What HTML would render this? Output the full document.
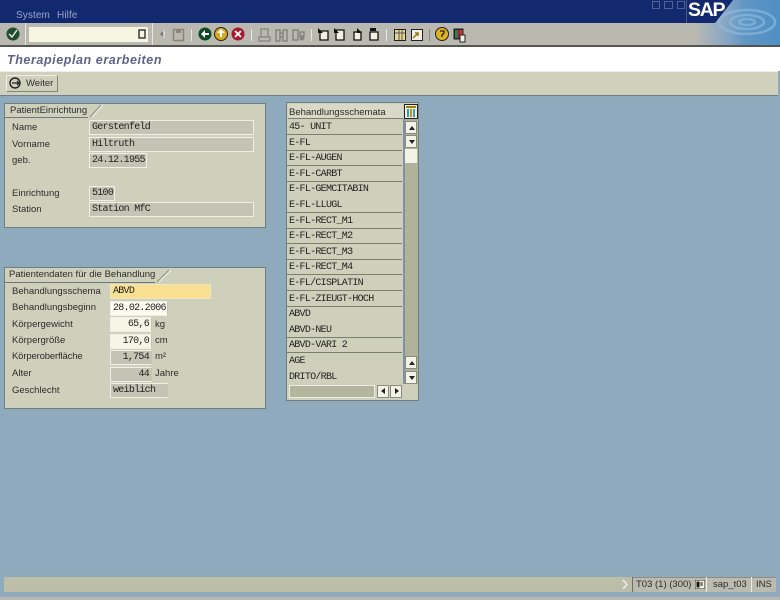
<!DOCTYPE html>
<html><head><meta charset="utf-8"><style>
html,body{margin:0;padding:0;width:780px;height:600px;overflow:hidden;background:#8fa9bd}
body{position:relative;font:10px "Liberation Sans",sans-serif;color:#222}
div,span,svg{position:absolute;box-sizing:border-box}
.l{font-size:9.500px;color:#2c2c2c;white-space:nowrap;filter:blur(.3px);height:14px;line-height:14px}
.f{font-family:"Liberation Mono",monospace;font-size:10px;letter-spacing:-.72px;color:#222;white-space:pre;height:15px;line-height:14px;padding:0 2px;background:#c3c4b4;border:1px solid #eef0e6;border-right-color:#c3c4b4;filter:blur(.25px)}
.p{background:#cfd0bb;border:1px solid #6f7f7f}
.r{left:0;width:115px;height:16px;border-bottom:1px solid #78806e;font-family:"Liberation Mono",monospace;font-size:10px;letter-spacing:-.72px;line-height:17px;padding-left:2px;color:#222;white-space:pre;filter:blur(.25px)}
.b{background:#f2f2e6;border:1px solid #8a8a80}
.a{width:0;height:0;left:3px}
</style></head><body>
<div style="left:0;top:0;width:780px;height:23px;background:#12286f"></div>
<div style="left:16px;top:10px;color:#9aa6c6;font-size:10px;letter-spacing:.1px;filter:blur(.3px)">System</div>
<div style="left:57px;top:10px;color:#9aa6c6;font-size:10px;letter-spacing:.1px;filter:blur(.3px)">Hilfe</div>
<div style="left:652px;top:1px;width:8px;height:8px;border:1px solid #53638f"></div>
<div style="left:664px;top:1px;width:9px;height:8px;border:1px solid #53638f"></div>
<div style="left:677px;top:1px;width:8px;height:8px;border:1px solid #53638f"></div>
<div style="left:0;top:23px;width:780px;height:23px;background:#b9b9b1"></div>
<svg style="left:695px;top:0" width="85" height="46" viewBox="0 0 85 46">
<defs><linearGradient id="g" x1="0" y1="0" x2="1" y2="0"><stop offset="0" stop-color="#b9b9b1"/><stop offset=".35" stop-color="#8aa7c4"/><stop offset=".6" stop-color="#5f95c4"/><stop offset="1" stop-color="#4f8fc4"/></linearGradient></defs>
<polygon points="0,46 0,23 20,23 38,0 85,0 85,46" fill="url(#g)"/>
<g fill="none" stroke="#8fc0e2" stroke-width="2.500" opacity=".6"><ellipse cx="52" cy="22" rx="28" ry="12"/><ellipse cx="52" cy="22" rx="17" ry="7"/><ellipse cx="52" cy="22" rx="8" ry="3"/></g>
<polygon points="-8,0 38,0 20,23 -8,23" fill="#12286f"/>
</svg>
<div style="left:686px;top:0;width:1px;height:23px;background:#4a5a80"></div>
<div style="left:688px;top:-2px;color:#fff;font-weight:bold;font-size:19.500px;letter-spacing:-1.300px;line-height:24px">SAP</div>
<div style="left:0;top:45px;width:780px;height:2px;background:#55554f"></div>

<svg style="left:0;top:23px" width="480" height="24" viewBox="0 0 480 24">
<rect x="25" y="0" width="1" height="22" fill="#e6e6de"/>
<rect x="152" y="0" width="1" height="22" fill="#e6e6de"/>
<rect x="29" y="4" width="119" height="15" fill="#f6f6e2"/>
<rect x="139" y="7" width="6" height="8" fill="none" stroke="#222" stroke-width="1.300"/>
<circle cx="13" cy="11" r="6.500" fill="#1f4d2c"/><path d="M9 11l3 3 5-7" stroke="#e8e8e8" stroke-width="1.500" fill="none"/>
<path d="M163 8l-3 3 3 3z" fill="#777"/><path d="M164 7v8" stroke="#e8e8e0"/>
<rect x="173.500" y="6.500" width="10" height="11" fill="none" stroke="#8f8474" stroke-width="1.500"/><rect x="176" y="7" width="5" height="3" fill="#8f8474"/>
<rect x="191" y="6" width="1" height="12" fill="#e8e8e0"/>
<circle cx="205" cy="11" r="6.500" fill="#0f4a26"/><path d="M201 11l4-4v3h4v2h-4v3z" fill="#fff"/>
<circle cx="221" cy="11" r="6.500" fill="#d8a820" stroke="#222"/><path d="M221 6l-4 4h3v4h2v-4h3z" fill="#fff"/>
<circle cx="238" cy="11" r="6.500" fill="#a81830"/><path d="M235 8l6 6m0-6l-6 6" stroke="#fff" stroke-width="1.800"/>
<rect x="251" y="6" width="1" height="12" fill="#e8e8e0"/>
<path d="M259 14h11v4h-11zM261 6h7v8h-7z" fill="none" stroke="#858580" stroke-width="1.300"/>
<path d="M276 7h4v11h-4zM283 7h4v11h-4zM280 10h3v4h-3z" fill="none" stroke="#858580" stroke-width="1.500"/>
<path d="M293 7h5v10h-5zM300 9h4v4h-4z" fill="none" stroke="#858580" stroke-width="1.500"/><circle cx="302" cy="15" r="2.500" fill="#858580"/>
<rect x="311" y="6" width="1" height="12" fill="#e8e8e0"/>
<g fill="#f2f2e0" stroke="#111" stroke-width="1.300"><path d="M320 8h8v9h-8z"/><path d="M336 7h8v10h-8z"/><path d="M354 9h7v8h-7z"/><path d="M370 9h8v8h-8z"/></g>
<g fill="#111"><path d="M318 5l5 5h-5z"/><path d="M334 5l5 5h-5z"/><path d="M357 5l5 5h-5z"/><path d="M370 5h6v3h-6z"/></g>
<rect x="386" y="6" width="1" height="12" fill="#e8e8e0"/>
<rect x="394.500" y="6.500" width="11" height="11" fill="#e8d890" stroke="#222"/><path d="M395 10h10M399 7v10M402 7v10" stroke="#555"/>
<rect x="411.500" y="6.500" width="11" height="11" fill="#f0f0e8" stroke="#222"/><path d="M413 15l5-5m-3 0h3v3" stroke="#a07810" stroke-width="1.500" fill="none"/>
<rect x="429" y="6" width="1" height="12" fill="#8a8a82"/>
<circle cx="442" cy="11" r="6.500" fill="#e0b020" stroke="#222"/><path d="M440 8h4v2l-2 2v2" stroke="#222" fill="none" stroke-width="1.300"/>
<rect x="453.500" y="5.500" width="10" height="11" fill="#222"/><rect x="455" y="7" width="2.500" height="8" fill="#2a8a3a"/><rect x="457.500" y="7" width="2.500" height="8" fill="#a02060"/><rect x="460" y="7" width="2.500" height="8" fill="#c04020"/>
<rect x="460" y="12" width="5" height="7" fill="#f0f0e8" stroke="#222"/>
</svg>

<div style="left:0;top:47px;width:780px;height:24px;background:#fff"></div>
<div style="left:7px;top:52px;font:italic bold 12.500px 'Liberation Sans',sans-serif;color:#5d6286;letter-spacing:.58px;line-height:16px;filter:blur(.2px)">Therapieplan erarbeiten</div>
<div style="left:0;top:71px;width:778px;height:25px;background:#d0d1bd;border-top:1px solid #f0f0e8;border-bottom:1px solid #6f8088"></div>
<div style="left:6px;top:75px;width:52px;height:17px;border:1px solid #a8a898;border-left-color:#eeeee4;border-top-color:#eeeee4;border-right-color:#858578;border-bottom-color:#858578;background:#d0d1bd"></div>
<svg style="left:8px;top:76px" width="16" height="15"><circle cx="7" cy="7" r="5" fill="none" stroke="#222" stroke-width="1.400"/><path d="M4 7h7l-2-2M11 7l-2 2" stroke="#222" fill="none" stroke-width="1.200"/></svg>
<div class="l" style="left:26px;top:77px">Weiter</div>

<div class="p" style="left:4px;top:103px;width:262px;height:125px"></div>
<svg style="left:5px;top:104px" width="100" height="15"><path d="M0 13.500H83" fill="none" stroke="#6a7a7a"/><path d="M85 13L96 1" stroke="#8a9080" fill="none"/><path d="M87 13L98 1" stroke="#eee" fill="none"/></svg>
<div class="l" style="left:10px;top:104px">PatientEinrichtung</div>
<div class="l" style="left:12px;top:121px">Name</div>
<div class="l" style="left:12px;top:138px">Vorname</div>
<div class="l" style="left:12px;top:154px">geb.</div>
<div class="l" style="left:12px;top:187px">Einrichtung</div>
<div class="l" style="left:12px;top:203px">Station</div>
<div class="f" style="left:89px;top:120px;width:165px;border-color:#eef0e6">Gerstenfeld</div>
<div class="f" style="left:89px;top:137px;width:165px;border-color:#eef0e6">Hiltruth</div>
<div class="f" style="left:89px;top:153px;width:58px;border-color:#eef0e6">24.12.1955</div>
<div class="f" style="left:89px;top:186px;width:26px;border-color:#eef0e6">5100</div>
<div class="f" style="left:89px;top:202px;width:165px;border-color:#eef0e6">Station MfC</div>

<div class="p" style="left:4px;top:267px;width:262px;height:142px"></div>
<svg style="left:5px;top:268px" width="170" height="15"><path d="M0 14.500H150" fill="none" stroke="#6a7a7a"/><path d="M152 14L164 2" stroke="#8a9080" fill="none"/><path d="M154 14L166 2" stroke="#eee" fill="none"/></svg>
<div class="l" style="left:9px;top:268px">Patientendaten für die Behandlung</div>
<div class="l" style="left:12px;top:285px">Behandlungsschema</div>
<div class="l" style="left:12px;top:301px">Behandlungsbeginn</div>
<div class="l" style="left:12px;top:318px">Körpergewicht</div>
<div class="l" style="left:12px;top:334px">Körpergröße</div>
<div class="l" style="left:12px;top:350px;letter-spacing:-.15px">Körperoberfläche</div>
<div class="l" style="left:12px;top:367px">Alter</div>
<div class="l" style="left:12px;top:384px">Geschlecht</div>
<div class="f" style="left:110px;top:284px;width:101px;background:#f8e090;border-color:#eee8c0">ABVD</div>
<div class="f" style="left:110px;top:301px;width:58px;background:#fbfbf0">28.02.2006</div>
<div class="f" style="left:110px;top:317px;width:42px;background:#f5f5e6;text-align:right">65,6</div>
<div class="f" style="left:110px;top:334px;width:42px;background:#f5f5e6;text-align:right">170,0</div>
<div class="f" style="left:110px;top:350px;width:42px;text-align:right">1,754</div>
<div class="f" style="left:110px;top:367px;width:42px;text-align:right">44</div>
<div class="f" style="left:110px;top:383px;width:58px">weiblich</div>
<div class="l" style="left:155px;top:318px">kg</div>
<div class="l" style="left:155px;top:334px">cm</div>
<div class="l" style="left:155px;top:350px">m²</div>
<div class="l" style="left:155px;top:367px">Jahre</div>

<div style="left:286px;top:102px;width:133px;height:299px;background:#cfd0bb;border:1px solid #6f7f7f">
<div style="left:1px;top:1px;width:115px;height:15px;background:#d8d9c6;border-bottom:1px solid #78806e"></div>
<div class="l" style="left:2px;top:3px">Behandlungsschemata</div>
<svg style="left:117px;top:1px" width="14" height="15"><rect x=".5" y=".5" width="13" height="14" fill="#f0f0e0" stroke="#222"/><rect x="2" y="2" width="10" height="2" fill="#a08000"/><rect x="3" y="5" width="2" height="8" fill="#30a0b0"/><rect x="6" y="5" width="2" height="8" fill="#c09020"/><rect x="9" y="5" width="2" height="8" fill="#30a0b0"/></svg>
<div style="left:0;top:16px;width:116px;height:266px">
<div class="r" style="top:0">45- UNIT</div>
<div class="r" style="top:15.600px">E-FL</div>
<div class="r" style="top:31.200px">E-FL-AUGEN</div>
<div class="r" style="top:46.800px">E-FL-CARBT</div>
<div class="r" style="top:62.400px;border:0">E-FL-GEMCITABIN</div>
<div class="r" style="top:78px">E-FL-LLUGL</div>
<div class="r" style="top:93.600px">E-FL-RECT_M1</div>
<div class="r" style="top:109.200px">E-FL-RECT_M2</div>
<div class="r" style="top:124.800px">E-FL-RECT_M3</div>
<div class="r" style="top:140.400px">E-FL-RECT_M4</div>
<div class="r" style="top:156px">E-FL/CISPLATIN</div>
<div class="r" style="top:171.600px">E-FL-ZIEUGT-HOCH</div>
<div class="r" style="top:187.200px;border:0">ABVD</div>
<div class="r" style="top:202.800px">ABVD-NEU</div>
<div class="r" style="top:218.400px">ABVD-VARI 2</div>
<div class="r" style="top:234px;border:0">AGE</div>
<div class="r" style="top:249.600px;border:0">DRITO/RBL</div>
</div>
<div style="left:116px;top:16px;width:2px;height:265px;background:#7c93a5"></div>
<div style="left:118px;top:16px;width:13px;height:265px;background:#b0b39a"></div>
<div class="b" style="left:118px;top:18px;width:12px;height:13px"><div class="a" style="top:4px;border:3px solid transparent;border-top:0;border-bottom:4px solid #222"></div></div>
<div class="b" style="left:118px;top:32px;width:12px;height:13px"><div class="a" style="top:4px;border:3px solid transparent;border-bottom:0;border-top:4px solid #222"></div></div>
<div class="b" style="left:118px;top:46px;width:12px;height:14px;border-color:#f2f2e6"></div>
<div class="b" style="left:118px;top:253px;width:12px;height:13px"><div class="a" style="top:4px;border:3px solid transparent;border-top:0;border-bottom:4px solid #222"></div></div>
<div class="b" style="left:118px;top:268px;width:12px;height:13px"><div class="a" style="top:4px;border:3px solid transparent;border-bottom:0;border-top:4px solid #222"></div></div>
<div style="left:2px;top:282px;width:86px;height:13px;background:#b3b59c;border:1px solid #eeeee2"></div>
<div class="b" style="left:90px;top:282px;width:12px;height:13px"><div style="left:3px;top:2px;width:0;height:0;border:3px solid transparent;border-left:0;border-right:4px solid #222"></div></div>
<div class="b" style="left:103px;top:282px;width:12px;height:13px"><div style="left:4px;top:2px;width:0;height:0;border:3px solid transparent;border-right:0;border-left:4px solid #222"></div></div>
</div>

<div style="left:4px;top:577px;width:772px;height:15px;background:#bcbea8"></div>
<div style="left:632px;top:577px;width:144px;height:15px;background:#bbbcaf;border-top:1px solid #8d8d80"></div>
<svg style="left:620px;top:579px" width="10" height="12"><path d="M3 1l4 4.500L3 10" stroke="#eee" fill="none" stroke-width="1.500"/></svg>
<div style="left:632px;top:577px;width:1px;height:15px;background:#70706a"></div>
<div style="left:706px;top:577px;width:1px;height:15px;background:#ededdf"></div>
<div style="left:751px;top:577px;width:1px;height:15px;background:#ededdf"></div>
<div class="l" style="left:636px;top:578px">T03 (1) (300)</div>
<svg style="left:695px;top:580px" width="10" height="9"><rect width="10" height="9" fill="#f2f2e0" stroke="#222"/><path d="M2 2h2v5H2zM5 3h3M5 5h3" stroke="#222"/></svg>
<div class="l" style="left:713px;top:578px">sap_t03</div>
<div class="l" style="left:756px;top:578px">INS</div>
<div style="left:0;top:597px;width:780px;height:3px;background:#b8b8b0"></div>
</body></html>
